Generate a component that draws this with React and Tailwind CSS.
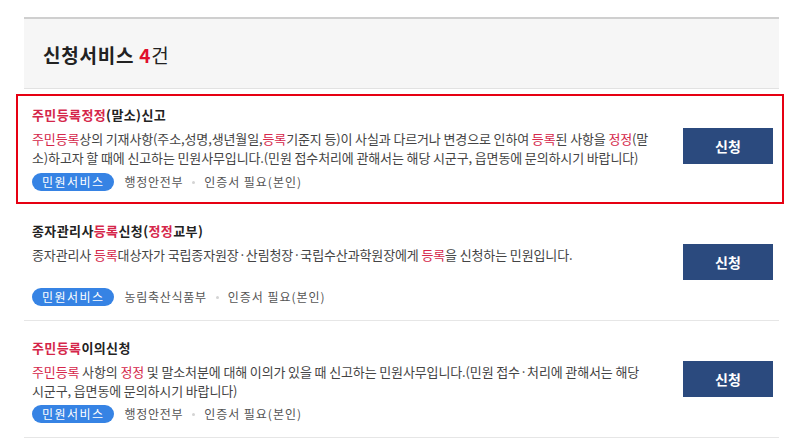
import React from 'react';

const R = ({ children }) => <span className="text-[#d5264a]">{children}</span>;

const Tags = ({ dept }) => (
  <div className="flex items-center h-[18px] text-[12px]">
    <span className="h-[18px] leading-[18px] px-[10px] rounded-full bg-[#3683e4] text-white tracking-[0.12em]">민원서비스</span>
    <span className="ml-[10px] text-[#555] tracking-[0.06em]">{dept}</span>
    <span className="mx-[9px] w-[3px] h-[3px] rounded-full bg-[#d4d4d4]"></span>
    <span className="text-[#555] tracking-[0.08em]">인증서 필요(본인)</span>
  </div>
);

const ApplyButton = ({ className = '' }) => (
  <button className={`w-[90px] h-[36px] shrink-0 bg-[#2b4a7e] text-white text-[14px] font-bold ${className}`}>신청</button>
);

const items = [
  {
    title: <>종자관리사<R>등록</R>신청(<R>정정</R>교부)</>,
    desc: <>종자관리사 <R>등록</R>대상자가 국립종자원장·산림청장·국립수산과학원장에게 <R>등록</R>을 신청하는 민원입니다.</>,
    dept: '농림축산식품부',
  },
  {
    title: <><R>주민등록</R>이의신청</>,
    desc: (
      <>
        <R>주민등록</R> 사항의 <R>정정</R> 및 말소처분에 대해 이의가 있을 때 신고하는 민원사무입니다.(민원 접수·처리에 관해서는 해당
        <br />
        시군구, 읍면동에 문의하시기 바랍니다)
      </>
    ),
    dept: '행정안전부',
  },
];

export default function App() {
  return (
    <div className="w-[786px] h-[446px] overflow-hidden bg-white pt-[17px] font-['Noto_Sans_CJK_KR',sans-serif]">
      <div className="ml-[24px] w-[755px] h-[72px] border-t-2 border-[#cfcfcf] border-b border-b-[#e2e2e2] bg-[#f6f6f6] flex items-center pl-[19px] pt-[3px]">
        <h2 className="text-[19px] font-bold text-[#222] tracking-[0.04em]">
          신청서비스 <span className="text-[#e0102c]">4</span><span className="font-normal">건</span>
        </h2>
      </div>

      <div className="mt-[5px] ml-[16px] w-[768px] h-[110px] border-2 border-[#e60012] flex items-center pl-[14px] pr-[9px]">
        <div className="flex-1 pt-[9px] pb-[11px]">
          <div className="h-[20px] leading-[20px] text-[13px] font-bold text-[#222] tracking-[0.03em]">
            <R>주민등록정정</R>(말소)신고
          </div>
          <p className="mt-[4px] text-[13px] leading-[19px] text-[#444] tracking-[-0.01em] whitespace-nowrap">
            <R>주민등록</R>상의 기재사항(주소,성명,생년월일,<R>등록</R>기준지 등)이 사실과 다르거나 변경으로 인하여 <R>등록</R>된 사항을 <R>정정</R>(말
            <br />
            소)하고자 할 때에 신고하는 민원사무입니다.(민원 접수처리에 관해서는 해당 시군구, 읍면동에 문의하시기 바랍니다)
          </p>
          <div className="mt-[6px]">
            <Tags dept="행정안전부" />
          </div>
        </div>
        <ApplyButton className="mb-[6px]" />
      </div>

      <ul className="ml-[24px] w-[755px]">
        {items.map((it, i) => (
          <li key={i} className="flex items-center border-b border-[#e6e6e6] pl-[8px] pr-[6px]">
            <div className="flex-1 pt-[17px] pb-[14px]">
              <div className="h-[20px] leading-[20px] text-[13px] font-bold text-[#222] tracking-[0.03em]">{it.title}</div>
              <p className="mt-[4px] min-h-[38px] text-[13px] leading-[19px] text-[#444] tracking-[-0.01em] whitespace-nowrap">{it.desc}</p>
              <div className="mt-[5px]">
                <Tags dept={it.dept} />
              </div>
            </div>
            <ApplyButton />
          </li>
        ))}
      </ul>
    </div>
  );
}
